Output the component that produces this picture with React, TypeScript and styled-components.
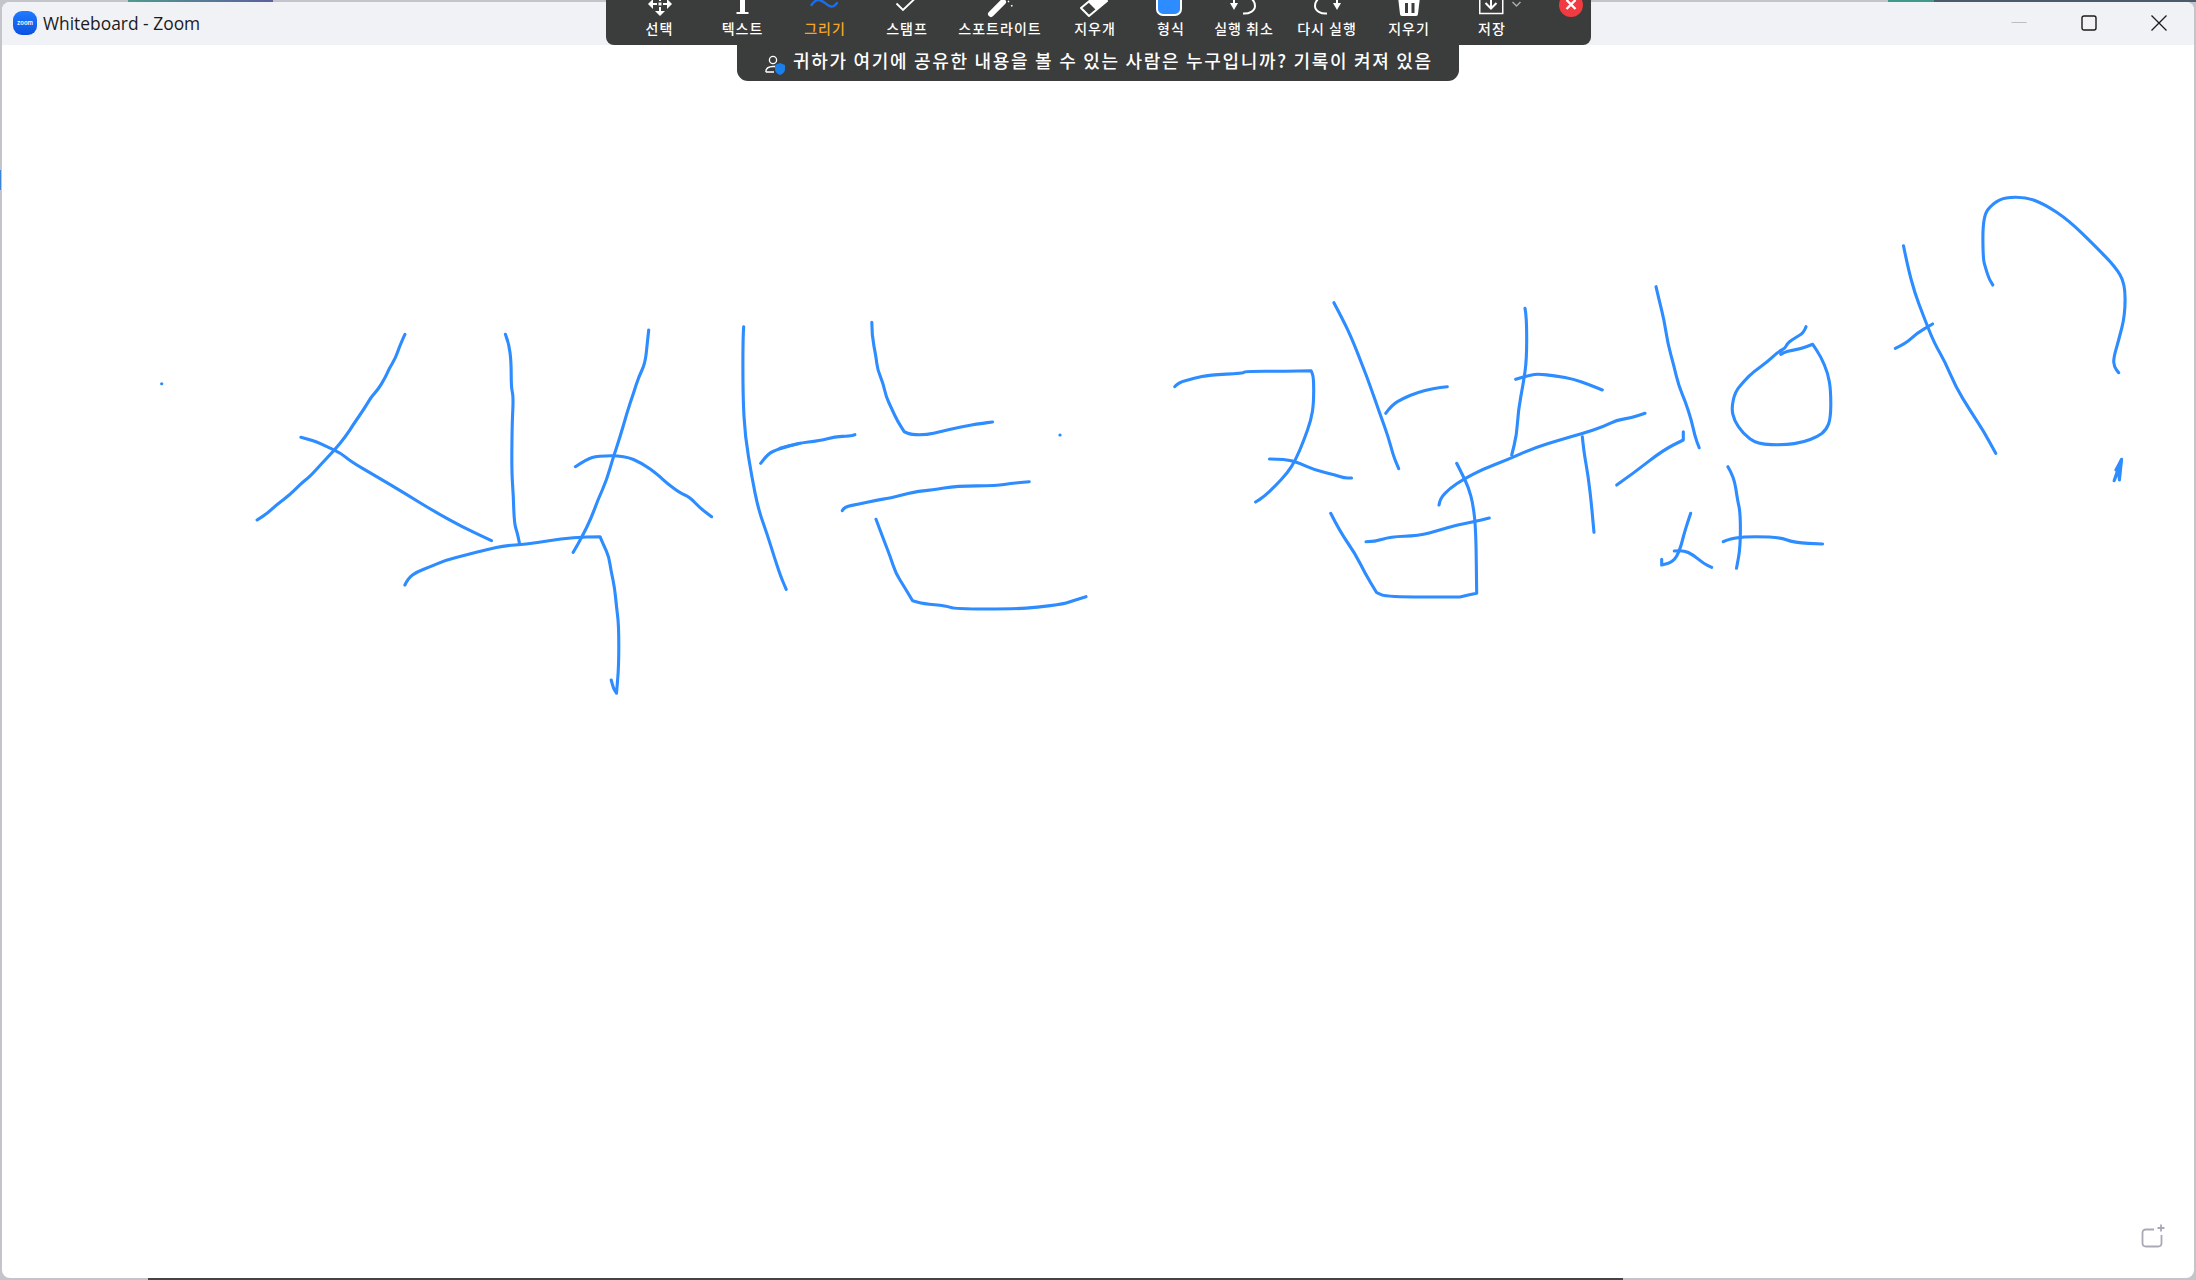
import React from 'react';
import styled, { createGlobalStyle } from 'styled-components';

const GlobalStyle = createGlobalStyle`
    html, body {
        margin: 0;
        padding: 0;
        height: 100%;
        overflow: hidden;
    }
    #root {
        height: 100%;
    }
`;

const UI_FONT = `"Noto Sans CJK KR", "Noto Sans", sans-serif`;
const INK = '#2d8cff';

type Trace = { ox: number; oy: number; kx: number; strokes: string[] };

// pen strokes, read off crops of the board: each set has its own origin and x scale, y scale is 3
// a doubled point keeps a sharp corner when the line is smoothed
const traces: Trace[] = [
    {
        ox: 100,
        oy: 300,
        kx: 2.24,
        strokes: [
            '683,103 672,135 662,175 648,205 638,235 622,270 608,290 590,330 568,372 550,410 524,452 495,493 470,530 452,548 425,585 395,615 375,640 352,660',
            '450,412 480,422 505,438 540,460 560,483 620,530 680,578 750,635 810,680 877,722',
            '908,103 916,130 921,185 921,262 926,290 923,370 922,510 926,590 928,670 935,700 940,732',
            '683,855 690,835 710,815 740,800 775,780 820,765 870,748 905,737 955,733 1005,722 1060,712 1120,710 1120,710 1128,735 1140,770 1145,815 1153,865 1157,920 1162,975 1162,1100 1157,1180 1157,1180 1150,1165 1145,1140',
            '1229,90 1226,130 1221,190 1207,230 1195,280 1180,340 1165,410 1150,470 1135,540 1115,600 1100,655 1080,710 1060,757',
            '1065,500 1090,478 1115,467 1175,467 1215,490 1250,525 1270,550 1300,580 1320,590 1345,625 1370,650',
            '1442,80 1440,110 1440,290 1445,410 1460,530 1475,630 1495,705 1510,770 1525,830 1537,868',
            '1480,490 1495,462 1520,447 1568,430',
            '138,251 138.5,251',
        ],
    },
    {
        ox: 780,
        oy: 290,
        kx: 2.376,
        strokes: [
            '0,475 40,460 95,452 130,440 165,438 178,434',
            '218,97 218,135 228,200 232,240 245,280 252,320 265,355 280,395 295,425 295,425 312,434 350,434 380,425 430,410 480,400 505,396',
            '148,662 152,650 190,642 230,630 260,625 320,605 360,600 420,588 515,587 550,580 592,575',
            '228,688 245,745 262,800 275,850 295,890 315,932 315,932 340,941 395,947 415,957 560,957 610,952 675,942 700,930 727,920',
            '665,435 665.5,435',
            '938,290 945,278 985,265 1020,255 1100,250 1105,244 1200,244 1262,242 1262,242 1268,262 1268,340 1262,390 1245,450 1225,510 1205,550 1175,590 1150,620 1130,636',
            '1163,507 1200,507 1235,520 1270,540 1320,555 1340,564 1358,564',
            '1316,38 1340,95 1360,150 1385,230 1400,280 1425,370 1445,440 1458,500 1470,536',
        ],
    },
    {
        ox: 1240,
        oy: 270,
        kx: 3,
        strokes: [
            '437,430 455,405 490,385 530,368 580,355 622,350',
            '272,730 300,785 345,850 375,910 410,968 410,968 440,981 660,981 660,981 710,970 710,970 708,790 700,705 685,650 665,610 650,580',
            '378,815 405,815 450,800 535,797 600,780 650,765 700,755 748,744',
            '855,115 860,140 860,270 850,340 835,420 830,495 815,555',
            '827,328 860,318 890,311 950,318 1000,327 1050,345 1087,360',
            '597,705 600,685 630,655 670,628 730,597 800,570 880,535 960,510 1030,490 1090,470 1130,450 1170,445 1215,430',
            '1027,500 1032,550 1045,620 1055,710 1062,787',
            '1130,645 1180,610 1270,540 1330,510 1330,510 1330,485',
            '1352,730 1335,780 1320,840 1300,875 1265,885 1265,885 1265,868',
            '1303,843 1330,840 1360,855 1390,880 1415,892',
        ],
    },
    {
        ox: 1640,
        oy: 180,
        kx: 2.82,
        strokes: [
            '45,320 55,365 68,420 78,490 95,555 110,620 128,665 145,720 155,770 167,803',
            '468,440 462,458 440,472 415,490 410,505 390,515 360,545 320,575 295,602 268,635 258,685 265,720 290,760 330,793 410,795 460,787 500,770 525,750 538,715 538,630 530,580 510,530 487,493 487,493 450,508 415,513 397,523',
            '248,860 265,890 275,960 283,1000 283,1100 272,1165',
            '235,1085 260,1070 390,1070 435,1088 515,1092',
            '743,197 755,260 775,340 800,410 830,490 860,545 890,620 930,690 970,755 1003,820',
            '720,505 750,490 780,460 825,432',
            '995,315 985,300 975,265 967,235 967,108 995,70 1030,52 1090,52 1140,72 1210,122 1285,200 1340,260 1368,310 1368,405 1350,480 1335,535 1337,560 1350,578',
            '1358,838 1358,838 1337,902 1337,902 1350,870 1350,870 1352,900 1352,900 1358,838 1358,838 1342,870',
        ],
    },
];

// midpoints joined by quadratic curves, so a stroke reads as a pen line
const smooth = (pts: number[][]) => {
    let d = `M${pts[0][0]} ${pts[0][1]}`;
    for (let i = 1; i < pts.length - 1; i++) {
        const mx = (pts[i][0] + pts[i + 1][0]) / 2;
        const my = (pts[i][1] + pts[i + 1][1]) / 2;
        d += ` Q${pts[i][0]} ${pts[i][1]} ${mx.toFixed(1)} ${my.toFixed(1)}`;
    }
    const last = pts[pts.length - 1];
    return `${d} L${last[0]} ${last[1]}`;
};

const inkPaths = traces.flatMap(({ ox, oy, kx, strokes }) =>
    strokes.map((s) =>
        smooth(
            s.split(' ').map((p) => {
                const [x, y] = p.split(',').map(Number);
                return [+(ox + x / kx).toFixed(1), +(oy + y / 3).toFixed(1)];
            })
        )
    )
);

const Desktop = styled.div`
    height: 1280px;
    box-sizing: border-box;
    padding: 2px;
    position: relative;
    display: flex;
    background:
        linear-gradient(
                to right,
                transparent 128px,
                #4f9a8c 128px,
                #5d5f9e 273px,
                transparent 273px,
                transparent 1888px,
                #3f9a8c 1888px,
                #3f9a8c 1934px,
                #4c5a6c 1934px
            )
            top / 100% 2px no-repeat,
        linear-gradient(to right, transparent 148px, #444 148px, #444 1623px, transparent 1623px) bottom / 100% 2px no-repeat,
        linear-gradient(#3d84d8, #3d84d8) 0 170px / 1px 20px no-repeat,
        #c4c5ca;
`;

const Window = styled.div`
    flex: 1;
    display: flex;
    flex-direction: column;
    border-radius: 8px;
    overflow: hidden;
    background: #fff;
`;

const TitleBar = styled.header`
    height: 43px;
    flex: none;
    box-sizing: border-box;
    padding: 0 0 2px 11px;
    display: flex;
    align-items: center;
    background: #f1f2f6;
`;

const ZoomLogo = styled.div`
    width: 24px;
    height: 24px;
    border-radius: 9px;
    background: linear-gradient(#1f7bff, #0b52e0);
    color: #fff;
    font: 600 6px "Inter", sans-serif;
    display: flex;
    align-items: center;
    justify-content: center;
`;

const WindowTitle = styled.span`
    margin-left: 6px;
    font: 400 17.4px "Open Sans", sans-serif;
    color: #1b1b1b;
`;

const WindowControls = styled.div`
    margin-left: auto;
    display: flex;
`;

const ControlButton = styled.div`
    width: 70px;
    height: 41px;
    display: flex;
    align-items: center;
    justify-content: center;
`;

const Canvas = styled.main`
    flex: 1;
    position: relative;
    min-height: 0;
`;

const Board = styled.svg`
    display: block;
    width: 100%;
    height: 100%;
    path {
        fill: none;
        stroke: ${INK};
        stroke-width: 3.1;
        stroke-linecap: round;
        stroke-linejoin: round;
    }
`;

const AddPage = styled.svg`
    position: absolute;
    right: 29px;
    bottom: 30px;
`;

const Overlay = styled.div`
    position: absolute;
    top: 0;
    left: 606px;
    width: 985px;
`;

const Toolbar = styled.nav`
    height: 52px;
    margin-top: -7px;
    display: flex;
    box-sizing: border-box;
    padding-left: 12px;
    background: #3b3c3c;
    border-radius: 0 0 8px 8px;
`;

const ToolButton = styled.div<{ $w: number }>`
    width: ${(p) => p.$w}px;
    flex: none;
    display: flex;
    flex-direction: column;
    align-items: center;
`;

const ToolIcon = styled.svg`
    width: 36px;
    height: 24px;
    flex: none;
    overflow: visible;
`;

const ToolLabel = styled.span<{ $active?: boolean }>`
    margin-top: 2px;
    white-space: nowrap;
    font: 500 14px/18px ${UI_FONT};
    letter-spacing: 1px;
    color: ${(p) => (p.$active ? '#f5a623' : '#fff')};
`;

const CloseSession = styled.svg`
    width: 24px;
    height: 24px;
    flex: none;
    margin-left: 23px;
`;

const Banner = styled.div`
    width: 722px;
    height: 36px;
    margin-left: 131px;
    box-sizing: border-box;
    padding-left: 28px;
    display: flex;
    align-items: center;
    gap: 8px;
    background: #3b3c3c;
    border-radius: 0 0 11px 11px;
`;

const BannerIcon = styled.svg`
    flex: none;
    margin-top: 4px;
`;

const BannerText = styled.span`
    margin-bottom: 7px;
    font: 500 18px ${UI_FONT};
    letter-spacing: 1.7px;
    color: #fff;
    white-space: nowrap;
`;

const SelectIcon = () => (
    <ToolIcon viewBox="0 0 36 24">
        <g fill="#fff">
            <polygon points="6,11 11,6 11,16" />
            <polygon points="30,11 25,6 25,16" />
            <polygon points="18,23 13,18 23,18" />
            <polygon points="18,-1 13,4 23,4" />
            <rect x="11" y="10" width="4" height="2" />
            <rect x="21" y="10" width="4" height="2" />
            <rect x="17" y="14" width="2" height="4" />
            <rect x="17" y="4" width="2" height="4" />
            <rect x="16.5" y="9.5" width="3" height="3" />
        </g>
    </ToolIcon>
);

const TextIcon = () => (
    <ToolIcon viewBox="0 0 36 24">
        <rect x="15" y="0" width="5" height="20" fill="#fff" />
        <rect x="11.5" y="19" width="12" height="2" fill="#fff" />
    </ToolIcon>
);

const DrawIcon = () => (
    <ToolIcon viewBox="0 0 36 24">
        <path d="M4.5 12 C9 5.5 13 6 18 10 S26 15.5 30 10" fill="none" stroke="#1a6fe8" strokeWidth="2.4" strokeLinecap="round" />
    </ToolIcon>
);

const StampIcon = () => (
    <ToolIcon viewBox="0 0 36 24">
        <path d="M7.5 10.5 L14 17 L26 5.5" fill="none" stroke="#fff" strokeWidth="1.9" />
    </ToolIcon>
);

const SpotlightIcon = () => (
    <ToolIcon viewBox="0 0 36 24">
        <path d="M9 21 L21 9" stroke="#fff" strokeWidth="6" strokeLinecap="round" />
        <path d="M26 9 L27 8 M29 13 L30.5 12.5 M25 5 L25.5 3.5" stroke="#fff" strokeWidth="1.4" />
    </ToolIcon>
);

const EraserIcon = () => (
    <ToolIcon viewBox="0 0 36 24">
        <polygon points="4,15 12,23 30,8 22,0" fill="none" stroke="#fff" strokeWidth="2" strokeLinejoin="round" />
        <polygon points="11,9 19,17 30,8 22,0" fill="#fff" />
    </ToolIcon>
);

const FormatIcon = () => (
    <ToolIcon viewBox="0 0 36 24">
        <rect x="4" y="-5" width="24" height="27" rx="6" fill="#2d8cff" stroke="#fff" strokeWidth="2" />
    </ToolIcon>
);

const UndoIcon = () => (
    <ToolIcon viewBox="0 0 36 24">
        <path d="M17 20.5 C23 21 29 18 29 13 C29 10 28 8 26 6" fill="none" stroke="#fff" strokeWidth="2" />
        <polygon points="4,10 12,10 8,17" fill="#fff" />
        <rect x="7" y="6" width="2" height="5" fill="#fff" />
    </ToolIcon>
);

const RedoIcon = () => (
    <ToolIcon viewBox="0 0 36 24">
        <path d="M18 20.5 C12 21 6 18 6 13 C6 10 7 8 9 6" fill="none" stroke="#fff" strokeWidth="2" />
        <polygon points="24,10 32,10 28,17" fill="#fff" />
        <rect x="27" y="6" width="2" height="5" fill="#fff" />
    </ToolIcon>
);

const TrashIcon = () => (
    <ToolIcon viewBox="0 0 36 24">
        <path d="M7 4 L29 4 L27 21 Q27 23 25 23 L11 23 Q9 23 9 21 Z" fill="#fff" />
        <rect x="14" y="10" width="3" height="10" fill="#3b3c3c" />
        <rect x="20.5" y="10" width="3" height="10" fill="#3b3c3c" />
    </ToolIcon>
);

const SaveIcon = () => (
    <ToolIcon viewBox="0 0 36 24">
        <path d="M5.75 -2 V20.5 H28.75 V-2" fill="none" stroke="#fff" strokeWidth="1.5" />
        <path d="M17 3 V15 M11.5 10 L17 15.5 L22.5 10" fill="none" stroke="#fff" strokeWidth="2" />
        <path d="M38.5 9 L42.5 13 L46.5 9" fill="none" stroke="#aaa" strokeWidth="1.5" />
    </ToolIcon>
);

const tools = [
    { label: '선택', w: 83, icon: <SelectIcon /> },
    { label: '텍스트', w: 83, icon: <TextIcon /> },
    { label: '그리기', w: 82, icon: <DrawIcon />, active: true },
    { label: '스탬프', w: 82, icon: <StampIcon /> },
    { label: '스포트라이트', w: 104, icon: <SpotlightIcon /> },
    { label: '지우개', w: 86, icon: <EraserIcon /> },
    { label: '형식', w: 66, icon: <FormatIcon /> },
    { label: '실행 취소', w: 80, icon: <UndoIcon /> },
    { label: '다시 실행', w: 86, icon: <RedoIcon /> },
    { label: '지우기', w: 78, icon: <TrashIcon /> },
    { label: '저장', w: 88, icon: <SaveIcon /> },
];

export default function App() {
    return (
        <>
            <GlobalStyle />
            <Desktop>
                <Window>
                    <TitleBar>
                        <ZoomLogo>zoom</ZoomLogo>
                        <WindowTitle>Whiteboard - Zoom</WindowTitle>
                        <WindowControls>
                            <ControlButton>
                                <svg width="16" height="16" viewBox="0 0 16 16">
                                    <path d="M0.5 7.5 H15.5" stroke="#bdbdbd" strokeWidth="1" />
                                </svg>
                            </ControlButton>
                            <ControlButton>
                                <svg width="16" height="16" viewBox="0 0 16 16">
                                    <rect x="1" y="1" width="14" height="14" rx="2" fill="none" stroke="#1b1b1b" strokeWidth="1.4" />
                                </svg>
                            </ControlButton>
                            <ControlButton>
                                <svg width="16" height="16" viewBox="0 0 16 16">
                                    <path d="M0.5 0.5 L15.5 15.5 M15.5 0.5 L0.5 15.5" stroke="#1b1b1b" strokeWidth="1.3" />
                                </svg>
                            </ControlButton>
                        </WindowControls>
                    </TitleBar>
                    <Canvas>
                        <Board viewBox="2 45 2192 1233" preserveAspectRatio="xMinYMin meet">
                            {inkPaths.map((d) => (
                                <path key={d} d={d} />
                            ))}
                        </Board>
                        <AddPage width="24" height="24" viewBox="0 0 24 24">
                            <path
                                d="M13 5.5 H5 Q1.5 5.5 1.5 9 V19 Q1.5 22.5 5 22.5 H17 Q20.5 22.5 20.5 19 V11"
                                fill="none"
                                stroke="#a9a9b6"
                                strokeWidth="1.8"
                            />
                            <path d="M20 0.5 V7.5 M16.5 4 H23.5" stroke="#a9a9b6" strokeWidth="1.8" />
                        </AddPage>
                    </Canvas>
                </Window>
                <Overlay>
                    <Toolbar>
                        {tools.map((t) => (
                            <ToolButton key={t.label} $w={t.w}>
                                {t.icon}
                                <ToolLabel $active={t.active}>{t.label}</ToolLabel>
                            </ToolButton>
                        ))}
                        <CloseSession viewBox="0 0 24 24">
                            <circle cx="12" cy="12" r="12" fill="#f23b40" />
                            <path d="M7.5 7 L16.5 16 M16.5 7 L7.5 16" stroke="#fff" strokeWidth="2.4" />
                        </CloseSession>
                    </Toolbar>
                    <Banner>
                        <BannerIcon width="20" height="20" viewBox="0 0 20 20">
                            <circle cx="8" cy="5" r="3.6" fill="none" stroke="#fff" strokeWidth="1.3" />
                            <path d="M0.8 17 C0.8 13 4 11.5 8 11.5 H10 M0.8 17 H9" fill="none" stroke="#fff" strokeWidth="1.3" />
                            <path d="M15 8 L20 10 V14 Q20 18 15 20 Q10 18 10 14 V10 Z" fill="#1a7fe8" />
                        </BannerIcon>
                        <BannerText>귀하가 여기에 공유한 내용을 볼 수 있는 사람은 누구입니까? 기록이 켜져 있음</BannerText>
                    </Banner>
                </Overlay>
            </Desktop>
        </>
    );
}
